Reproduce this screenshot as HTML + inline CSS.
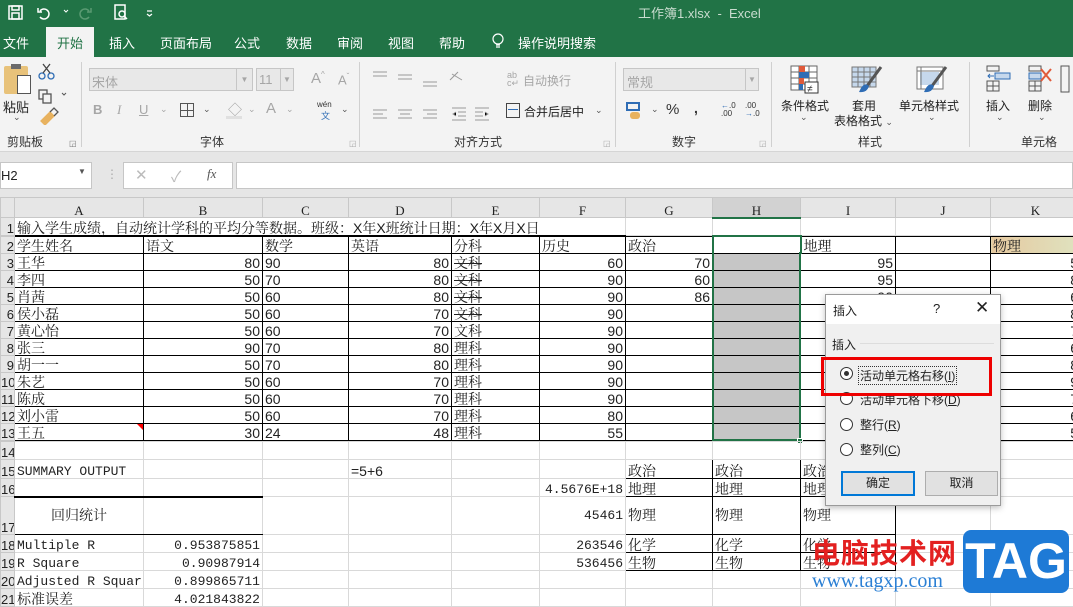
<!DOCTYPE html>
<html><head><meta charset="utf-8">
<style>
*{margin:0;padding:0;box-sizing:border-box}
body{width:1073px;height:597px;overflow:hidden;position:relative;background:#fff;font-family:"Liberation Sans","Microsoft YaHei","Noto Sans CJK SC",sans-serif;font-size:12px;color:#222}
.a{position:absolute;white-space:nowrap}
#title{left:0;top:0;width:1073px;height:57px;background:#217346}
.tab{position:absolute;top:33px;color:#fff;font-size:13px}
#rib{left:0;top:57px;width:1073px;height:95px;background:#f3f3f3;border-bottom:1px solid #d5d5d5}
.sep{position:absolute;top:62px;width:1px;height:85px;background:#d0d0d0}
.gl{position:absolute;top:133px;font-size:12px;color:#333}
.g{color:#a6a6a6}
#fb{left:0;top:152px;width:1073px;height:45px;background:#e6e6e6}
table{position:absolute;left:0;top:197px;width:1080px;border-collapse:collapse;table-layout:fixed;font-family:"Liberation Sans","Noto Serif CJK SC",serif;font-size:14px}
td{border:1px solid #d9d9d9;height:17px;padding:0 2px;white-space:nowrap;overflow:visible;line-height:13px;vertical-align:bottom}
tr{height:17px}
td.h{background:#e6e6e6;text-align:center;font-size:13px;border-color:#c8c8c8;color:#222;font-family:"Liberation Serif",serif}
td.rh{background:#e6e6e6;text-align:right;font-size:13px;border-color:#c8c8c8;padding:0;overflow:hidden;color:#222}
.b td.c{border:1px solid #000}
.r{text-align:right}
.st{text-decoration:line-through}
.hs{background:#c6c6c6}
.mono{font-family:"Liberation Mono","Noto Serif CJK SC",monospace;font-size:13px}
</style></head><body>
<div id="title" class="a"></div>
<svg class="a" style="left:7px;top:3px" width="150" height="20" viewBox="0 0 150 20" fill="none" stroke="#fff" stroke-width="1.5">
<rect x="2" y="3" width="13" height="13"/><rect x="5" y="3" width="7" height="4"/><rect x="5" y="10" width="7" height="6"/>
<path d="M33 8 a5 5 0 1 1 0 6 M31 5 v4 h4"/><path d="M57 7 l2 2 2-2" stroke-width="1"/>
<path d="M82 8 a5 5 0 1 0 0 6 M84 5 v4 h-4" stroke="#5a9a72"/>
<rect x="108" y="2" width="10" height="14"/><circle cx="115" cy="11" r="3"/><path d="M117 13 l3 3"/>
<path d="M140 8 h5 M140 11 l2.5 2 2.5-2" stroke-width="1.2"/>
</svg>
<div class="a" style="left:638px;top:3px;color:#c9dccf;font-size:13px">工作簿1.xlsx&nbsp; - &nbsp;Excel</div>
<div class="a" style="left:46px;top:27px;width:48px;height:31px;background:#f3f3f3"></div>
<div class="tab" style="left:3px">文件</div>
<div class="tab" style="left:57px;color:#217346">开始</div>
<div class="tab" style="left:109px">插入</div>
<div class="tab" style="left:160px">页面布局</div>
<div class="tab" style="left:234px">公式</div>
<div class="tab" style="left:286px">数据</div>
<div class="tab" style="left:337px">审阅</div>
<div class="tab" style="left:388px">视图</div>
<div class="tab" style="left:439px">帮助</div>
<svg class="a" style="left:492px;top:33px" width="12" height="17" fill="none" stroke="#fff" stroke-width="1.2"><circle cx="6" cy="6" r="5"/><path d="M4 12h4M4 14h4"/></svg>
<div class="tab" style="left:518px">操作说明搜索</div>

<div id="rib" class="a"></div>
<div class="a" style="left:4px;top:66px;width:24px;height:28px;background:#e8c27a;border-radius:2px"></div>
<div class="a" style="left:11px;top:64px;width:10px;height:5px;background:#6b6b6b"></div>
<div class="a" style="left:17px;top:75px;width:14px;height:19px;background:#fff;border:1px solid #555"></div>
<div class="a" style="left:3px;top:97px;font-size:13px">粘贴</div>
<div class="a" style="left:13px;top:112px;font-size:9px;color:#555">⌄</div>
<svg class="a" style="left:38px;top:63px" width="40" height="62" fill="none" stroke-width="1.3">
<circle cx="4" cy="13" r="3" stroke="#2f6db5"/><circle cx="13" cy="13" r="3" stroke="#2f6db5"/><path d="M5 10 L12 1 M12 10 L5 1" stroke="#444"/>
<rect x="1" y="27" width="8" height="9" stroke="#555"/><rect x="5" y="31" width="8" height="9" stroke="#555" fill="#f3f3f3"/><path d="M24 30l2 2 2-2" stroke="#555" stroke-width="1"/>
<path d="M3 58 l9-9 4 4 -9 9z" fill="#e8b25f" stroke="#e8b25f"/><path d="M12 49 l4-4 4 4-4 4" stroke="#555"/>
</svg>
<div class="gl" style="left:7px">剪贴板</div>
<div class="a" style="left:69px;top:139px;font-size:8px;color:#777">◲</div>
<div class="sep" style="left:81px"></div>
<div class="a g" style="left:89px;top:68px;width:164px;height:23px;background:#e8e8e8;border:1px solid #c6c6c6;padding:3px 2px;font-size:13px">宋体<span style="position:absolute;right:0;top:0;width:16px;height:21px;border-left:1px solid #c6c6c6;font-size:8px;text-align:center;line-height:21px">▼</span></div>
<div class="a g" style="left:256px;top:68px;width:38px;height:23px;background:#e8e8e8;border:1px solid #c6c6c6;padding:3px 2px;font-size:13px">11<span style="position:absolute;right:0;top:0;width:13px;height:21px;border-left:1px solid #c6c6c6;font-size:8px;text-align:center;line-height:21px">▼</span></div>
<div class="a g" style="left:311px;top:70px;font-size:15px">A<sup style="font-size:8px">^</sup></div>
<div class="a g" style="left:338px;top:72px;font-size:13px">A<sup style="font-size:8px">ˇ</sup></div>
<div class="a g" style="left:93px;top:102px;font-size:13px;font-weight:bold">B</div>
<div class="a g" style="left:117px;top:102px;font-size:13px;font-style:italic;font-family:'Liberation Serif'">I</div>
<div class="a g" style="left:139px;top:102px;font-size:13px;text-decoration:underline">U</div>
<div class="a g" style="left:160px;top:104px;font-size:9px">⌄</div>
<div class="a" style="left:180px;top:103px;width:14px;height:14px;border:1px solid #555;background:linear-gradient(#555,#555) 6px 0/1px 100% no-repeat,linear-gradient(#555,#555) 0 6px/100% 1px no-repeat"></div>
<div class="a" style="left:203px;top:104px;font-size:9px;color:#555">⌄</div>
<div class="a g" style="left:228px;top:100px;font-size:14px">◇</div>
<div class="a" style="left:226px;top:116px;width:16px;height:3px;background:#e0e0e0"></div>
<div class="a g" style="left:248px;top:104px;font-size:9px">⌄</div>
<div class="a g" style="left:266px;top:100px;font-size:15px">A</div>
<div class="a g" style="left:286px;top:104px;font-size:9px">⌄</div>
<div class="a" style="left:317px;top:100px;font-size:8px;color:#333">wén</div>
<div class="a" style="left:321px;top:109px;font-size:9px;color:#2f6db5">文</div>
<div class="a" style="left:341px;top:104px;font-size:9px;color:#555">⌄</div>
<div class="gl" style="left:200px">字体</div>
<div class="a" style="left:349px;top:139px;font-size:8px;color:#aaa">◲</div>
<div class="sep" style="left:359px"></div>
<svg class="a" style="left:370px;top:68px" width="240" height="55" stroke="#999" stroke-width="1">
<path d="M3 4h14M3 8h14M28 7h14M28 11h14M53 14h14M53 18h14"/>
<path d="M3 42h14M3 46h10M3 50h14M28 42h14M30 46h10M28 50h14M53 42h14M57 46h10M53 50h14"/>
<path d="M82 6 l10 6 M80 12 l8-8" /><path d="M82 40h14M88 44h8M88 48h8M82 52h14M86 44l-3 2 3 2"/>
<path d="M105 40h14M105 44h8M105 48h8M105 52h14M115 44l3 2-3 2"/>
</svg>
<div class="a g" style="left:507px;top:71px;font-size:9px;line-height:8px">ab<br>c↵</div>
<div class="a g" style="left:523px;top:72px;font-size:12px">自动换行</div>
<div class="a" style="left:506px;top:103px;width:14px;height:15px;border:1px solid #444"></div>
<div class="a" style="left:508px;top:109px;width:10px;height:1px;background:#2f6db5"></div>
<div class="a" style="left:524px;top:103px;font-size:12px">合并后居中</div>
<div class="a" style="left:595px;top:105px;font-size:9px;color:#555">⌄</div>
<div class="gl" style="left:454px">对齐方式</div>
<div class="a" style="left:603px;top:139px;font-size:8px;color:#aaa">◲</div>
<div class="sep" style="left:615px"></div>
<div class="a g" style="left:623px;top:68px;width:136px;height:23px;background:#e8e8e8;border:1px solid #c6c6c6;padding:3px 3px;font-size:13px">常规<span style="position:absolute;right:0;top:0;width:13px;height:21px;border-left:1px solid #c6c6c6;font-size:8px;text-align:center;line-height:21px">▼</span></div>
<div class="a" style="left:626px;top:102px;width:14px;height:9px;border:2px solid #2f6db5"></div>
<div class="a" style="left:630px;top:112px;width:10px;height:7px;background:#e8b25f;border-radius:3px"></div>
<div class="a" style="left:651px;top:104px;font-size:9px;color:#555">⌄</div>
<div class="a" style="left:666px;top:101px;font-size:15px;color:#333">%</div>
<div class="a" style="left:694px;top:100px;font-size:14px;color:#333;font-weight:bold">,</div>
<div class="a" style="left:721px;top:102px;font-size:8px;line-height:8px;color:#333"><span style="color:#2f6db5">←</span>.0<br>.00</div>
<div class="a" style="left:745px;top:102px;font-size:8px;line-height:8px;color:#333">.00<br><span style="color:#2f6db5">→</span>.0</div>
<div class="gl" style="left:672px">数字</div>
<div class="a" style="left:759px;top:139px;font-size:8px;color:#aaa">◲</div>
<div class="sep" style="left:771px"></div>
<svg class="a" style="left:790px;top:64px" width="30" height="30" fill="none" stroke="#666" stroke-width="1">
<rect x="1" y="2" width="26" height="24" fill="#fff"/><path d="M1 8h26M1 14h26M1 20h26M9 2v24M19 2v24"/>
<rect x="9" y="2" width="6" height="6" fill="#e05a3a" stroke="none"/><rect x="9" y="8" width="10" height="6" fill="#2f6db5" stroke="none"/><rect x="9" y="14" width="5" height="6" fill="#e05a3a" stroke="none"/><rect x="9" y="20" width="4" height="6" fill="#2f6db5" stroke="none"/>
<rect x="15" y="18" width="13" height="11" fill="#fff" stroke="#333"/><text x="17" y="28" font-size="10" fill="#333" stroke="none">≠</text>
</svg>
<div class="a" style="left:781px;top:97px;font-size:12px">条件格式</div>
<div class="a" style="left:800px;top:112px;font-size:9px;color:#555">⌄</div>
<svg class="a" style="left:851px;top:66px" width="32" height="30" fill="none" stroke="#777" stroke-width="1">
<rect x="1" y="1" width="24" height="20" fill="#c6d8ec"/><path d="M1 6h24M1 11h24M1 16h24M7 1v20M13 1v20M19 1v20"/>
<path d="M30 1 L16 20" stroke="#555" stroke-width="3"/><path d="M10 22 q4-6 8-2 q-2 7-10 6z" fill="#2f6db5" stroke="none"/>
</svg>
<div class="a" style="left:852px;top:97px;font-size:12px">套用</div>
<div class="a" style="left:834px;top:112px;font-size:12px">表格格式 <span style="font-size:9px;color:#555">⌄</span></div>
<svg class="a" style="left:916px;top:66px" width="32" height="30" fill="none" stroke="#777" stroke-width="1">
<rect x="1" y="1" width="26" height="22" fill="#fff"/><rect x="4" y="6" width="19" height="13" fill="#c6d8ec" stroke="none"/><path d="M1 5h26M5 1v22"/>
<path d="M30 1 L16 20" stroke="#555" stroke-width="3"/><path d="M10 22 q4-6 8-2 q-2 7-10 6z" fill="#2f6db5" stroke="none"/>
</svg>
<div class="a" style="left:899px;top:97px;font-size:12px">单元格样式</div>
<div class="a" style="left:928px;top:112px;font-size:9px;color:#555">⌄</div>
<div class="gl" style="left:858px">样式</div>
<div class="sep" style="left:969px"></div>
<svg class="a" style="left:985px;top:65px" width="85" height="30" fill="none" stroke="#555" stroke-width="1">
<rect x="2" y="1" width="12" height="5"/><rect x="2" y="16" width="12" height="10"/><path d="M2 21h12M8 16v10"/>
<rect x="10" y="8" width="15" height="6" fill="#c6d8ec" stroke="#2f6db5"/><path d="M9 11h-6 M5 9l-2 2 2 2" stroke="#2f6db5"/>
<rect x="44" y="1" width="12" height="5"/><rect x="44" y="16" width="12" height="10"/><path d="M44 21h12M50 16v10"/>
<rect x="44" y="8" width="12" height="6" fill="#c6d8ec" stroke="#2f6db5"/><path d="M56 4 l10 12 M66 4 l-10 12" stroke="#e05a3a" stroke-width="2"/>
<rect x="76" y="1" width="8" height="26"/>
</svg>
<div class="a" style="left:986px;top:97px;font-size:12px">插入</div>
<div class="a" style="left:996px;top:112px;font-size:9px;color:#555">⌄</div>
<div class="a" style="left:1028px;top:97px;font-size:12px">删除</div>
<div class="a" style="left:1038px;top:112px;font-size:9px;color:#555">⌄</div>
<div class="gl" style="left:1021px">单元格</div>

<div id="fb" class="a"></div>
<div class="a" style="left:0;top:162px;width:92px;height:27px;background:#fff;border:1px solid #c6c6c6;padding:5px 0;font-size:13px">H2<span style="position:absolute;left:77px;top:4px;font-size:8px;color:#555">▼</span></div>
<div class="a" style="left:106px;top:167px;color:#aaa;font-size:12px">⋮</div>
<div class="a" style="left:123px;top:162px;width:110px;height:27px;background:#fff;border:1px solid #c6c6c6"></div>
<div class="a" style="left:135px;top:166px;color:#bbb;font-size:15px">✕</div>
<div class="a" style="left:171px;top:166px;color:#bbb;font-size:15px">✓</div>
<div class="a" style="left:207px;top:166px;color:#555;font-size:13px;font-style:italic;font-family:'Liberation Serif'">fx</div>
<div class="a" style="left:236px;top:162px;width:837px;height:27px;background:#fff;border:1px solid #c6c6c6"></div>

<table>
<colgroup><col style="width:14px"><col style="width:129px"><col style="width:119px"><col style="width:86px"><col style="width:103px"><col style="width:88px"><col style="width:86px"><col style="width:87px"><col style="width:88px"><col style="width:95px"><col style="width:95px"><col style="width:90px"></colgroup>
<tr style="height:20px"><td class="h" style="height:20px"></td><td class="h">A</td><td class="h">B</td><td class="h">C</td><td class="h">D</td><td class="h">E</td><td class="h">F</td><td class="h">G</td><td class="h" style="background:#d2d2d2;border-bottom:2px solid #217346">H</td><td class="h">I</td><td class="h">J</td><td class="h">K</td></tr>
<tr style="height:18px"><td class="rh" style="height:18px">1</td><td style="border-bottom:1px solid #000;border-right:none">输入学生成绩，自动统计学科的平均分等数据。班级：X年X班统计日期：X年X月X日</td><td style="border-bottom:1px solid #000;border-left:none;border-right:none"></td><td style="border-bottom:1px solid #000;border-left:none;border-right:none"></td><td style="border-bottom:1px solid #000;border-left:none;border-right:none"></td><td style="border-bottom:1px solid #000;border-left:none;border-right:none"></td><td style="border-bottom:1px solid #000;border-left:none"></td><td></td><td></td><td></td><td></td><td></td></tr>
</table>
<table style="top:235px" class="b">
<colgroup><col style="width:14px"><col style="width:129px"><col style="width:119px"><col style="width:86px"><col style="width:103px"><col style="width:88px"><col style="width:86px"><col style="width:87px"><col style="width:88px"><col style="width:95px"><col style="width:95px"><col style="width:90px"></colgroup>
<tr><td class="rh">2</td><td class="c">学生姓名</td><td class="c">语文</td><td class="c">数学</td><td class="c">英语</td><td class="c">分科</td><td class="c">历史</td><td class="c">政治</td><td class="c" style="border:2px solid #217346;border-bottom:none"></td><td class="c">地理</td><td class="c"></td><td class="c" style="background:linear-gradient(90deg,#e6c9a0,#dfe3c0)">物理</td></tr>
<tr><td class="rh">3</td><td class="c">王华</td><td class="c r">80</td><td class="c">90</td><td class="c r">80</td><td class="c st">文科</td><td class="c r">60</td><td class="c r">70</td><td class="c hs"></td><td class="c r">95</td><td class="c"></td><td class="c r">5</td></tr>
<tr><td class="rh">4</td><td class="c">李四</td><td class="c r">50</td><td class="c">70</td><td class="c r">80</td><td class="c st">文科</td><td class="c r">90</td><td class="c r">60</td><td class="c hs"></td><td class="c r">95</td><td class="c"></td><td class="c r">8</td></tr>
<tr><td class="rh">5</td><td class="c">肖茜</td><td class="c r">50</td><td class="c">60</td><td class="c r">80</td><td class="c st">文科</td><td class="c r">90</td><td class="c r">86</td><td class="c hs"></td><td class="c r">90</td><td class="c"></td><td class="c r">6</td></tr>
<tr><td class="rh">6</td><td class="c">侯小磊</td><td class="c r">50</td><td class="c">60</td><td class="c r">70</td><td class="c st">文科</td><td class="c r">90</td><td class="c"></td><td class="c hs"></td><td class="c"></td><td class="c"></td><td class="c r">8</td></tr>
<tr><td class="rh">7</td><td class="c">黄心怡</td><td class="c r">50</td><td class="c">60</td><td class="c r">70</td><td class="c">文科</td><td class="c r">90</td><td class="c"></td><td class="c hs"></td><td class="c"></td><td class="c"></td><td class="c r">7</td></tr>
<tr><td class="rh">8</td><td class="c">张三</td><td class="c r">90</td><td class="c">70</td><td class="c r">80</td><td class="c">理科</td><td class="c r">90</td><td class="c"></td><td class="c hs"></td><td class="c"></td><td class="c"></td><td class="c r">6</td></tr>
<tr><td class="rh">9</td><td class="c">胡一一</td><td class="c r">50</td><td class="c">70</td><td class="c r">80</td><td class="c">理科</td><td class="c r">90</td><td class="c"></td><td class="c hs"></td><td class="c"></td><td class="c"></td><td class="c r">8</td></tr>
<tr><td class="rh">10</td><td class="c">朱艺</td><td class="c r">50</td><td class="c">60</td><td class="c r">70</td><td class="c">理科</td><td class="c r">90</td><td class="c"></td><td class="c hs"></td><td class="c"></td><td class="c"></td><td class="c r">9</td></tr>
<tr><td class="rh">11</td><td class="c">陈成</td><td class="c r">50</td><td class="c">60</td><td class="c r">70</td><td class="c">理科</td><td class="c r">90</td><td class="c"></td><td class="c hs"></td><td class="c"></td><td class="c"></td><td class="c r">7</td></tr>
<tr><td class="rh">12</td><td class="c">刘小雷</td><td class="c r">50</td><td class="c">60</td><td class="c r">70</td><td class="c">理科</td><td class="c r">80</td><td class="c"></td><td class="c hs"></td><td class="c"></td><td class="c"></td><td class="c r">6</td></tr>
<tr><td class="rh">13</td><td class="c" style="position:relative">王五<span style="position:absolute;right:0;top:0;border-top:6px solid red;border-left:6px solid transparent"></span></td><td class="c r">30</td><td class="c">24</td><td class="c r">48</td><td class="c">理科</td><td class="c r">55</td><td class="c"></td><td class="c hs"></td><td class="c"></td><td class="c"></td><td class="c r">5</td></tr>
</table>
<div class="a" style="left:712px;top:252px;width:89px;height:189px;border:2px solid #217346;border-top:none"></div>
<div class="a" style="left:797px;top:438px;width:6px;height:6px;background:#217346;border:1px solid #fff"></div>
<table style="top:441px">
<colgroup><col style="width:14px"><col style="width:129px"><col style="width:119px"><col style="width:86px"><col style="width:103px"><col style="width:88px"><col style="width:86px"><col style="width:87px"><col style="width:88px"><col style="width:95px"><col style="width:95px"><col style="width:90px"></colgroup>
<tr style="height:18px"><td class="rh" style="height:18px">14</td><td></td><td></td><td></td><td></td><td></td><td></td><td></td><td></td><td></td><td></td><td></td></tr>
<tr style="height:19px"><td class="rh" style="height:19px">15</td><td class="mono">SUMMARY OUTPUT</td><td></td><td></td><td>=5+6</td><td></td><td></td><td style="border:1px solid #000">政治</td><td style="border:1px solid #000">政治</td><td style="border:1px solid #000">政治</td><td></td><td></td></tr>
<tr style="height:18px"><td class="rh" style="height:18px">16</td><td style="border-bottom:2px solid #000"></td><td style="border-bottom:2px solid #000"></td><td></td><td></td><td></td><td class="r mono">4.5676E+18</td><td style="border:1px solid #000">地理</td><td style="border:1px solid #000">地理</td><td style="border:1px solid #000">地理</td><td></td><td></td></tr>
<tr style="height:38px"><td class="rh" style="height:38px">17</td><td style="border-bottom:1px solid #000;text-align:center;vertical-align:middle">回归统计</td><td style="border-bottom:1px solid #000"></td><td></td><td></td><td></td><td class="r mono" style="vertical-align:middle">45461</td><td style="border:1px solid #000;vertical-align:middle">物理</td><td style="border:1px solid #000;vertical-align:middle">物理</td><td style="border:1px solid #000;vertical-align:middle">物理</td><td></td><td></td></tr>
<tr style="height:18px"><td class="rh" style="height:18px">18</td><td class="mono">Multiple R</td><td class="r mono">0.953875851</td><td></td><td></td><td></td><td class="r mono">263546</td><td style="border:1px solid #000">化学</td><td style="border:1px solid #000">化学</td><td style="border:1px solid #000">化学</td><td></td><td></td></tr>
<tr style="height:18px"><td class="rh" style="height:18px">19</td><td class="mono">R Square</td><td class="r mono">0.90987914</td><td></td><td></td><td></td><td class="r mono">536456</td><td style="border:1px solid #000">生物</td><td style="border:1px solid #000">生物</td><td style="border:1px solid #000">生物</td><td></td><td></td></tr>
<tr style="height:18px"><td class="rh" style="height:18px">20</td><td class="mono" style="overflow:hidden">Adjusted R Squar</td><td class="r mono">0.899865711</td><td></td><td></td><td></td><td></td><td></td><td></td><td></td><td></td><td></td></tr>
<tr style="height:18px"><td class="rh" style="height:18px">21</td><td>标准误差</td><td class="r mono">4.021843822</td><td></td><td></td><td></td><td></td><td></td><td></td><td></td><td></td><td></td></tr>
</table>

<div class="a" style="left:825px;top:294px;width:176px;height:212px;background:#f0f0f0;border:1px solid #9a9a9a;box-shadow:0 2px 6px rgba(0,0,0,.25)"></div>
<div class="a" style="left:826px;top:295px;width:174px;height:29px;background:#fff"></div>
<div class="a" style="left:833px;top:302px;font-size:12px">插入</div>
<div class="a" style="left:933px;top:301px;font-size:13px">?</div>
<div class="a" style="left:975px;top:298px;font-size:17px;font-weight:300">✕</div>
<div class="a" style="left:832px;top:336px;font-size:12px">插入</div>
<div class="a" style="left:860px;top:343px;width:134px;height:1px;background:#ddd"></div>
<div class="a" style="left:840px;top:367px;width:13px;height:13px;border:1px solid #333;border-radius:50%;background:#fff"></div>
<div class="a" style="left:844px;top:371px;width:5px;height:5px;border-radius:50%;background:#333"></div>
<div class="a" style="left:858px;top:366px;font-size:12px;border:1px dotted #333;padding:0 1px">活动单元格右移(<u>I</u>)</div>
<div class="a" style="left:840px;top:392px;width:13px;height:13px;border:1px solid #333;border-radius:50%;background:#fff"></div>
<div class="a" style="left:860px;top:391px;font-size:12px">活动单元格下移(<u>D</u>)</div>
<div class="a" style="left:840px;top:418px;width:13px;height:13px;border:1px solid #333;border-radius:50%;background:#fff"></div>
<div class="a" style="left:860px;top:416px;font-size:12px">整行(<u>R</u>)</div>
<div class="a" style="left:840px;top:443px;width:13px;height:13px;border:1px solid #333;border-radius:50%;background:#fff"></div>
<div class="a" style="left:860px;top:441px;font-size:12px">整列(<u>C</u>)</div>
<div class="a" style="left:821px;top:357px;width:171px;height:39px;border:3px solid #ee0000"></div>
<div class="a" style="left:841px;top:471px;width:74px;height:25px;background:#e1e1e1;border:2px solid #0078d7;text-align:center;line-height:21px;font-size:12px">确定</div>
<div class="a" style="left:925px;top:471px;width:73px;height:25px;background:#e1e1e1;border:1px solid #adadad;text-align:center;line-height:23px;font-size:12px">取消</div>

<div class="a" style="left:812px;top:532px;font-size:28px;font-weight:bold;color:#e32020;font-family:'Noto Sans CJK SC',sans-serif;letter-spacing:1px">电脑技术网</div>
<div class="a" style="left:812px;top:570px;font-size:20px;color:#2a7fd4;font-family:'Liberation Serif',serif">www.tagxp.com</div>
<div class="a" style="left:963px;top:530px;width:106px;height:63px;background:#1e7ad6;border-radius:8px;color:#fff;font-size:50px;font-weight:bold;text-align:center;line-height:63px;font-family:'Liberation Sans',sans-serif">TAG</div>
</body></html>
